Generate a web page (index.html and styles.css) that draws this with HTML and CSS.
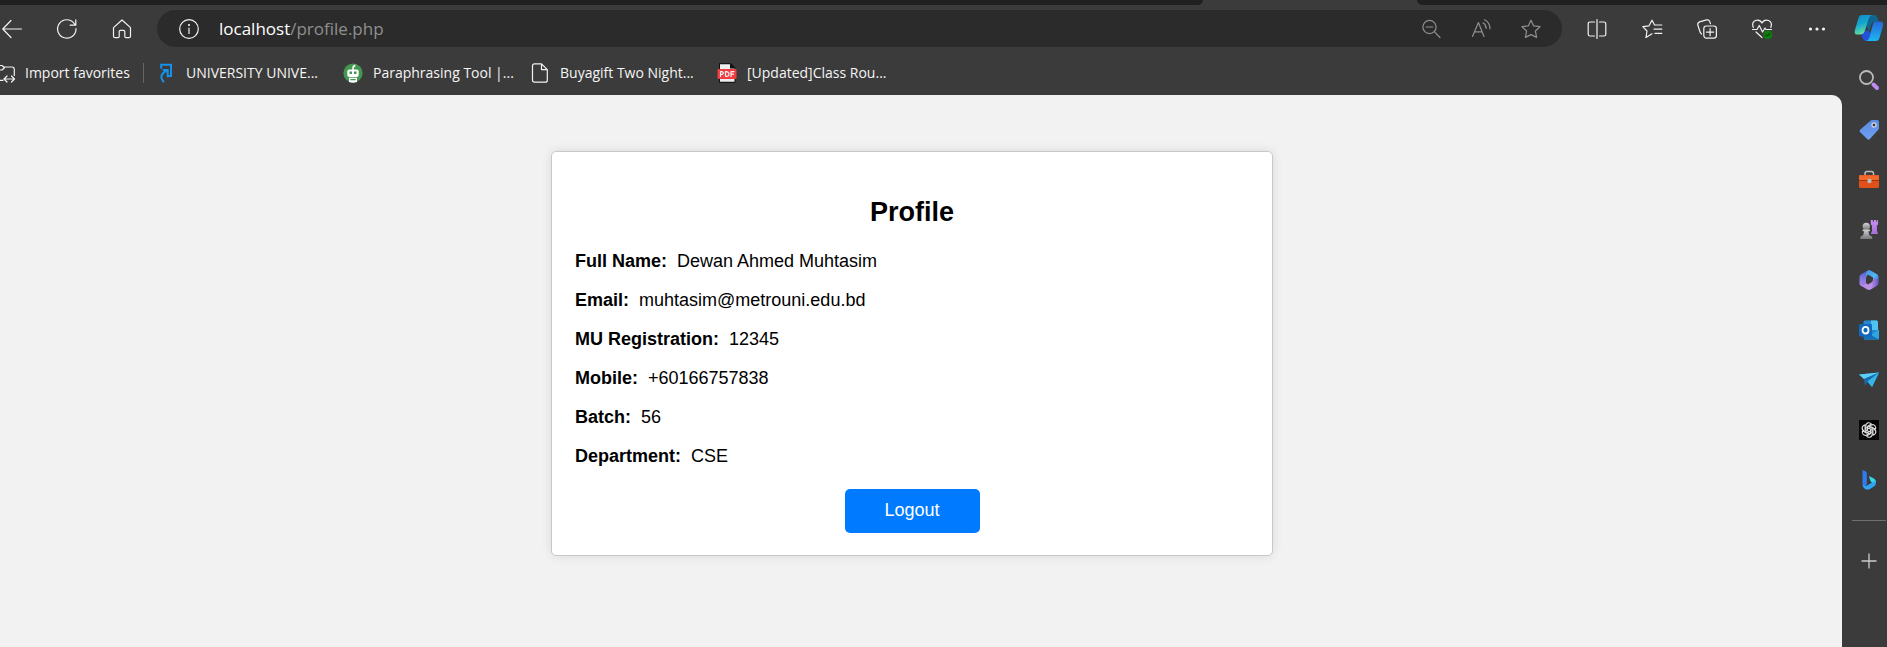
FILE: index.html
```html
<!DOCTYPE html>
<html lang="en">
<head>
<meta charset="utf-8">
<title>Profile</title>
<link rel="stylesheet" href="styles.css">
</head>
<body>
<div class="tabstrip"><div class="tabs-before"></div><div class="tabs-after"></div></div>
<div class="window">
  <div class="main">
    <header class="toolbar">
      <nav class="group" aria-label="Navigation">
        <button class="icon-btn" aria-label="Back"><svg viewBox="0 0 20 20"><path d="M19.500 10H1M9 1.500L.8 10L9 18.500"/></svg></button>
        <button class="icon-btn" aria-label="Refresh"><svg viewBox="0 0 20 20"><path d="M19 9.500A9.200 9.200 0 1 1 17.300 4.600L18.500 6M18.800.8V6.200H13.200"/></svg></button>
        <button class="icon-btn" aria-label="Home"><svg viewBox="0 0 20 20"><path d="M1.500 8.600L10 1L18.500 8.600V17.200Q18.500 18.700 17 18.700H14Q12.800 18.700 12.800 17.500V12.500Q12.800 11.300 11.600 11.300H8.400Q7.200 11.300 7.200 12.500V17.500Q7.200 18.700 6 18.700H3Q1.500 18.700 1.500 17.200Z"/></svg></button>
      </nav>
      <div class="address">
        <button class="icon-btn" aria-label="Site information"><svg viewBox="0 0 20 20"><circle cx="10" cy="10" r="9.300"/><path d="M10 9V14.500"/><circle cx="10" cy="6" r=".5"/></svg></button>
        <div class="url">localhost<span>/profile.php</span></div>
        <div class="address-tools">
          <button class="icon-btn" aria-label="Zoom out"><svg viewBox="0 0 20 20"><circle cx="8.500" cy="8" r="6.600"/><path d="M5.200 8H11.800M13.300 12.700L19 18.500"/></svg></button>
          <button class="icon-btn" aria-label="Read aloud"><svg viewBox="0 0 20 20"><path d="M1.500 17.500L7.400 3.500L13 17.500M3.400 12.800H11.200M12 3.800Q15 5.500 15.200 9.500M13.500.8Q18.700 3.200 19 9.800"/></svg></button>
          <button class="icon-btn" aria-label="Add to favorites"><svg viewBox="0 0 20 20"><path d="M10 1.200L12.700 6.900L19 7.700L14.400 12L15.600 18.400L10 15.600L4.400 18.400L5.600 12L1 7.700L7.300 6.900Z"/></svg></button>
        </div>
      </div>
      <div class="group">
        <button class="icon-btn" aria-label="Split screen"><svg viewBox="0 0 20 20"><path d="M7.500 3H3Q1.200 3 1.200 4.800V15.200Q1.200 17 3 17H7.500M12.500 3H17Q18.800 3 18.800 4.800V15.200Q18.800 17 17 17H12.500M10 .5V19.500"/></svg></button>
        <button class="icon-btn" aria-label="Favorites"><svg viewBox="0 0 20 20"><path d="M13 6H19.800M12 10.200H19.800M13 14.400H19.800M10 14.800L4 18.600L5 12L.8 7.700L7 6.800L10 1.200L12.600 6M13 6H12.600"/></svg></button>
        <button class="icon-btn" aria-label="Collections"><svg viewBox="0 0 20 20"><rect x="6.800" y="7" width="12.600" height="12.200" rx="2.600"/><path d="M13.100 9.500V16.700M9.500 13.100H16.700M4.600 15Q3.300 14 2.900 12.500L.8 6Q.4 3.800 2.500 2.900L9.500.9Q12 .4 12.800 2.600L13.400 4.600"/></svg></button>
        <button class="icon-btn" aria-label="Browser essentials"><svg viewBox="0 0 20 20"><path d="M1.300 8.500C-1.500 1.500 7-1.500 10 4C13-1.500 21.500 1.500 18.800 8.500M.5 10.500H5L7.300 6.500L10.500 13L13 9L14 10.500H19.500M4 13L10 18.500"/><circle class="ok" cx="15.800" cy="15.700" r="4.500"/><path class="ok-mark" d="M14 16L15.300 17L17.800 14.500"/></svg></button>
        <button class="icon-btn" aria-label="Settings and more"><svg viewBox="0 0 20 20"><g class="dots"><circle cx="3.500" cy="10" r="1.600"/><circle cx="10" cy="10" r="1.600"/><circle cx="16.500" cy="10" r="1.600"/></g></svg></button>
      </div>
    </header>
    <nav class="favorites" aria-label="Favorites">
      <a class="import" href="#"><svg viewBox="5 0 15 20"><path d="M5 2.500H7L9.500 4.700L7 7H5M9.500 4H17Q19.300 4 19.300 6.300V12.500M5 17.300H8M9.200 16H19.300M12 13L9 16L12 19M16.500 13L19.500 16L16.500 19"/></svg>Import favorites</a>
      <a class="fav" href="#"><svg viewBox="0 0 20 20"><g class="blue"><path d="M5.200 5V1.700H15V13H12.500M7.500 7H11.700V13.500M11.500 7.200C6 10 3 13.500 7.500 18.500"/></g></svg>UNIVERSITY UNIVE...</a>
      <a class="fav" href="#"><svg viewBox="0 0 20 20"><g class="solid"><circle cx="10" cy="10" r="9.600" fill="#459653"/><rect x="4.300" y="6.500" width="11.400" height="7.500" rx="2" fill="#fff"/><path d="M9.300 7V4Q9.500 2 12.300 1.500V3.500L10.800 4.500V7ZM6 14.700H14V19Q10 20.500 6 19Z" fill="#fff"/><path d="M6.500 8.500H9V11H6.500ZM11 8.500H13.500V11H11ZM7.300 16H12.700V17.200H7.300Z" fill="#459653"/></g></svg>Paraphrasing Tool |...</a>
      <a class="fav" href="#"><svg viewBox="0 0 20 20"><path d="M4.500.8H11.500L17.300 6.600V17.200Q17.300 19.200 15.300 19.200H4.500Q2.500 19.200 2.500 17.200V2.800Q2.500.8 4.500.8ZM11.500.8V6.600H17.300"/></svg>Buyagift Two Night...</a>
      <a class="fav" href="#"><svg viewBox="0 0 20 20"><g class="solid"><path d="M2 .3H14L18.500 5V19.700H2Z" fill="#111"/><path d="M3 1.300H13V5.500H17.500V18.700H3Z" fill="#eee"/><rect x=".5" y="6" width="19" height="10" rx="1" fill="#ef3e42"/></g><path d="M3.500 13.500V8.700H5.400Q7.200 10 5.400 11.400H3.500M8.500 8.700V13.200Q12 13.700 12 11Q12 8.500 8.500 8.700M14 13.500V8.700H17M14 11.200H16.500"/></svg>[Updated]Class Rou...</a>
    </nav>
    <main class="page">
      <section class="card">
        <h2>Profile</h2>
        <dl>
          <div class="row"><dt>Full Name:</dt><dd>Dewan Ahmed Muhtasim</dd></div>
          <div class="row"><dt>Email:</dt><dd>muhtasim@metrouni.edu.bd</dd></div>
          <div class="row"><dt>MU Registration:</dt><dd>12345</dd></div>
          <div class="row"><dt>Mobile:</dt><dd>+60166757838</dd></div>
          <div class="row"><dt>Batch:</dt><dd>56</dd></div>
          <div class="row"><dt>Department:</dt><dd>CSE</dd></div>
        </dl>
        <button class="logout">Logout</button>
      </section>
    </main>
  </div>
  <aside class="sidebar" aria-label="Sidebar">
    <svg class="defs" aria-hidden="true">
      <defs>
        <linearGradient id="teal" x2="0.300" y2="1"><stop stop-color="#1488c9"/><stop offset=".5" stop-color="#14a5cf"/><stop offset="1" stop-color="#65dca0"/></linearGradient>
        <linearGradient id="sky" x2="0" y2="1"><stop stop-color="#2768d8"/><stop offset="1" stop-color="#1bb6f2"/></linearGradient>
        <linearGradient id="tag" x2="0" y2="1"><stop stop-color="#5b8bdf"/><stop offset="1" stop-color="#6ea0f4"/></linearGradient>
        <linearGradient id="violet" x2="0" y2="1"><stop stop-color="#c792f5"/><stop offset="1" stop-color="#a46fd8"/></linearGradient>
        <linearGradient id="metal" x2="0" y2="1"><stop stop-color="#d2d2d2"/><stop offset="1" stop-color="#777"/></linearGradient>
        <linearGradient id="office-left" x2="0" y2="1"><stop stop-color="#4a56c8"/><stop offset=".5" stop-color="#7d76e0"/><stop offset="1" stop-color="#b084e8"/></linearGradient>
        <linearGradient id="office-right" x2="1" y2="1"><stop stop-color="#3f8fe0"/><stop offset=".6" stop-color="#55b8f2"/><stop offset="1" stop-color="#3a62d0"/></linearGradient>
        <linearGradient id="office-base" x2="1"><stop stop-color="#b488ea"/><stop offset=".6" stop-color="#c091e6"/><stop offset="1" stop-color="#6a55c4"/></linearGradient>
      </defs>
    </svg>
    <button class="copilot" aria-label="Copilot"><svg viewBox="0 0 30 28"><path d="M16 1H20Q22.500 1 23.500 4L24.500 7.500H21Q18.500 7.500 17.500 10L15 18L11 8Z" fill="#0e668f"/><path d="M7.500 1H18Q15.500 2 14.500 5L10.500 18Q9.500 20.500 7 20.500H3Q0 20.500.8 16.500L4.500 4Q5.300 1 7.500 1Z" fill="url(#teal)"/><path d="M7 20.500Q9.500 20.500 10.500 18L13 16L17 19L14 27H12Q9.500 27 8.500 24Z" fill="#2450da"/><path d="M21 7.500H26.500Q30 7.500 29 11.500L25.500 24Q24.500 27 22 27H12Q14.500 26 15.500 23L19 10Q19.500 7.500 21 7.500Z" fill="url(#sky)"/></svg></button>
    <button aria-label="Search"><svg viewBox="0 0 20 20"><circle cx="7.500" cy="7.500" r="6.500" fill="none" stroke="#b9b9b9" stroke-width="1.800"/><path d="M14.500 14.500L18 18" stroke="#c08af0" stroke-width="4" stroke-linecap="round"/></svg></button>
    <button aria-label="Shopping"><svg viewBox="0 0 20 20"><path d="M11.500.8Q12 0 13 0H18Q20 0 20 2V8Q20 9 19.300 9.800L10.800 19Q9.500 20.300 8.200 19L1.200 12.200Q0 11 1.100 9.800Z" fill="url(#tag)"/><circle cx="15" cy="5" r="2" fill="#333" stroke="#ccd" stroke-width="1.400"/></svg></button>
    <button aria-label="Tools"><svg viewBox="0 0 20 20"><path d="M6 6V3.500Q6 1.500 8 1.500H12.500Q14.500 1.500 14.500 3.500V6" fill="none" stroke="#bbb" stroke-width="1.500"/><rect y="5" width="20" height="13" rx="1.300" fill="#e0501a"/><path d="M0 5.500H20V10.500H0Z" fill="#f2692c"/><path d="M0 10.500H20" stroke="#a93208"/><circle cx="10.500" cy="11" r="2.200" fill="#bbb"/></svg></button>
    <button aria-label="Games"><svg viewBox="0 0 20 22"><g fill="url(#metal)"><circle cx="7" cy="7" r="4"/><path d="M3 10.500H11V12.500H9.300L10.500 17H3.500L4.700 12.500H3ZM.3 21Q.3 17 3.500 17H10.500Q13.700 17 13.700 21Z"/></g><path d="M12 0H14.300V2H15.500V0H18V2H19V0H20V5L18.700 6V12L20 15.500H12L13.300 12V6L12 5Z" fill="url(#violet)"/></svg></button>
    <button aria-label="Microsoft 365"><svg viewBox="0 0 20 20"><path d="M9.500 0L2 4.300Q.5 5.200.5 7V13.500Q.5 15 2 15.800L7 13V7.500Q7 5.500 9 4.500Z" fill="url(#office-left)"/><path d="M9.500 0Q10.800 0 12 .7L18 4.200Q19.500 5.200 19.500 7V12L14 9V7.500L9 4.500Q7 5.500 7 8Q5.500 2.500 9.500 0Z" fill="url(#office-right)"/><path d="M19.500 9V13Q19.500 15 18 15.800L11.700 19.500Q10 20.300 8.300 19.500L2 15.800Q.8 15 .5 13.500Q3 16 7 13L9 14.500L13 12Q14 11.200 14 9Z" fill="url(#office-base)"/></svg></button>
    <button aria-label="Outlook"><svg viewBox="0 0 20 20"><rect x="4.500" y=".5" width="14.500" height="16" rx="1.500" fill="#2688d4"/><path d="M12 .5H17.500Q19 .5 19 2V10H12Z" fill="#50c4f0"/><path d="M5 19.500L20 9.500V18.500Q20 19.500 18.500 19.500Z" fill="#30a5df"/><path d="M5 11L20 19.500H6Q4.500 19.500 4.500 18Z" fill="#1671b8"/><rect y="4" width="13" height="12.500" rx="1.300" fill="#1069bd"/><ellipse cx="6.500" cy="10.200" rx="3" ry="3.300" fill="none" stroke="#fff" stroke-width="1.800"/></svg></button>
    <button aria-label="Drop"><svg viewBox="0 0 20 20"><path d="M0 4.500L20 2.500L13 17L8.800 12.200Z" fill="#289bd8"/><path d="M0 4.500L20 2.500L5 9Z" fill="#5bd0f7"/><path d="M5 9L20 2.500L8.500 11.500L6 16Z" fill="#1769aa"/><path d="M8.500 11.500L20 2.500L13 17Z" fill="#35b4e8"/></svg></button>
    <button aria-label="ChatGPT"><svg viewBox="0 0 20 20"><path d="M0 0H20V20H0Z" fill="#050505"/><g fill="none" stroke="#ddd" stroke-width="1.100"><path id="petal" d="M6.800 11.800V6Q6.800 3 9.600 2.700Q11.500 2.600 12.500 4L8.500 6.300V10.800"/><use href="#petal" transform="rotate(60 10 10)"/><use href="#petal" transform="rotate(120 10 10)"/><use href="#petal" transform="rotate(180 10 10)"/><use href="#petal" transform="rotate(240 10 10)"/><use href="#petal" transform="rotate(300 10 10)"/></g></svg></button>
    <button aria-label="Bing"><svg viewBox="0 0 20 20"><path d="M3.500 0L6.500 1.200Q7.800 1.800 7.800 3.500V14L5.500 17.500Q3.500 16 3.500 14Z" fill="#2f7cf0"/><path d="M9.800 6L14 8Q17 9.500 17 12.500L14 14L11.500 11Z" fill="#35d5e8"/><path d="M3.500 14Q5 17 8 15.500L14 12Q16.500 11 17 12.500Q17 15 15 16.500L11 19Q8.500 20.500 6 19Q3.500 17.500 3.500 14Z" fill="#2fa4f6"/></svg></button>
    <hr>
    <button class="add" aria-label="Customize"><svg viewBox="0 0 20 20"><path d="M2.500 10H17.500M10 2.500V17.500" stroke="#ccc" stroke-width="1.300"/></svg></button>
  </aside>
</div>
</body>
</html>
```

FILE: styles.css
```css
* { box-sizing: border-box; }

body {
  margin: 0;
  min-height: 100vh;
  display: flex;
  flex-direction: column;
  background: #3b3b3b;
  color: #fff;
  font-family: "Segoe UI", "Open Sans", "Noto Sans", sans-serif;
}

button {
  padding: 0;
  border: 0;
  background: none;
  color: inherit;
  font: inherit;
}

svg { display: block; width: 20px; height: 20px; overflow: visible; }

.tabstrip { display: flex; justify-content: space-between; height: 5px; }
.tabs-before { width: 1203px; background: #202020; border-radius: 0 0 10px 0; }
.tabs-after { width: 470px; background: #202020; border-radius: 0 0 0 10px; }

.window { flex: 1; display: flex; }
.main { flex: 1; min-width: 0; display: flex; flex-direction: column; }

.toolbar { display: flex; align-items: center; gap: 25px; padding: 5px 15px 0 0; }
.group { display: flex; gap: 35px; }
nav.group { padding-left: 2px; }

.icon-btn svg,
.favorites svg {
  fill: none;
  stroke: #f2f2f2;
  stroke-width: 1.2px;
  stroke-linejoin: round;
  stroke-linecap: round;
}
.icon-btn .dots { fill: #f2f2f2; stroke: none; }
.icon-btn .ok { fill: #107c10; stroke: none; }
.icon-btn .ok-mark { stroke: #064b06; }

.address {
  flex: 1;
  display: flex;
  align-items: center;
  gap: 20px;
  height: 37px;
  padding: 0 21px 0 22px;
  border-radius: 19px;
  background: #2b2b2b;
}
.url { flex: 1; font-size: 17px; line-height: 24px; }
.url span { color: #8f8f8f; }
.address-tools { display: flex; gap: 30px; }
.address-tools .icon-btn svg { stroke: #8f8f8f; }

.favorites { display: flex; align-items: center; height: 48px; padding-top: 4px; }
.favorites a {
  display: flex;
  align-items: center;
  gap: 10px;
  color: #f5f5f5;
  font-size: 14px;
  line-height: 20px;
  text-decoration: none;
  white-space: nowrap;
}
.favorites .import { width: 144px; border-right: 1px solid #666; }
.favorites .import svg { width: 15px; }
.favorites .fav { width: 187px; padding-left: 12px; }
.favorites .blue { stroke: #1591ea; stroke-width: 2px; stroke-linejoin: miter; }
.favorites .solid { stroke: none; }

.page {
  flex: 1;
  padding: 56px 18px 24px 0;
  border-radius: 0 10px 0 0;
  background: #f2f2f2;
  color: #000;
  font-family: Arial, "Liberation Sans", sans-serif;
  font-size: 18px;
  line-height: 21px;
}
.card {
  max-width: 722px;
  margin: 0 auto;
  padding: 22px 23px;
  border: 1px solid #c8c8c8;
  border-radius: 5px;
  background: #fff;
  box-shadow: 0 0 11px rgba(0, 0, 0, 0.1);
}
.card h2 { margin: 22px 0 23px; font-size: 27px; line-height: 32px; text-align: center; }
.card dl { display: grid; gap: 18px; margin: 0 0 22px; }
.row { display: flex; gap: 10px; }
.row dt { font-weight: bold; }
.row dd { margin: 0; }
.logout {
  display: block;
  width: 135px;
  margin: 0 auto;
  padding: 11px 0 12px;
  border-radius: 5px;
  background: #007bff;
  color: #fff;
}

.sidebar {
  width: 45px;
  display: flex;
  flex-direction: column;
  align-items: center;
  gap: 30px;
  padding: 9px 0 0 9px;
}
.sidebar .defs { position: absolute; width: 0; height: 0; }
.sidebar .copilot svg { width: 30px; height: 28px; }
.sidebar .copilot { margin-bottom: -2px; }
.sidebar hr { width: 34px; height: 1px; margin: 0; border: 0; background: #707070; }
```
